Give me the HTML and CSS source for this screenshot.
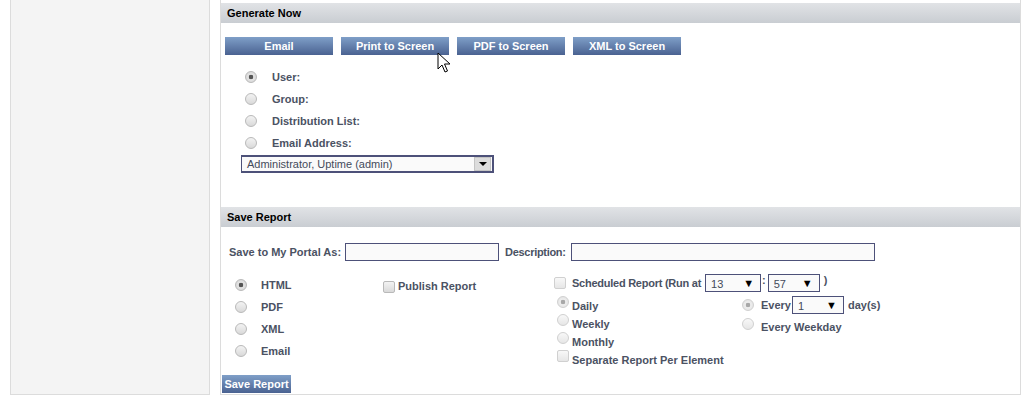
FILE: index.html
```html
<!DOCTYPE html>
<html lang="en">
<head>
    <meta charset="UTF-8">
    <title>Report Options</title>
    <link rel="stylesheet" href="styles.css">
</head>
<body>
<div class="page">
    <div class="sidebar"></div>

    <div class="main">
        <div class="section-head">Generate Now</div>
        <div class="generate">
            <div class="buttons">
                <button class="btn">Email</button>
                <button class="btn">Print to Screen</button>
                <button class="btn">PDF to Screen</button>
                <button class="btn">XML to Screen</button>
            </div>

            <div class="targets">
                <label class="target"><input type="radio" name="target" checked><span>User:</span></label>
                <label class="target"><input type="radio" name="target"><span>Group:</span></label>
                <label class="target"><input type="radio" name="target"><span>Distribution List:</span></label>
                <label class="target"><input type="radio" name="target"><span>Email Address:</span></label>
            </div>

            <div class="select wide">
                <span class="select-text">Administrator, Uptime (admin)</span>
                <span class="select-btn"><span class="tri"></span></span>
            </div>
        </div>

        <div class="section-head">Save Report</div>
        <div class="save">
            <div class="portal-row">
                <span class="lbl">Save to My Portal As:</span>
                <input class="text-in portal" type="text">
                <span class="lbl desc-lbl">Description:</span>
                <input class="text-in desc" type="text">
            </div>

            <div class="options">
                <div class="formats">
                    <label class="format"><input type="radio" name="fmt" checked><span>HTML</span></label>
                    <label class="format"><input type="radio" name="fmt"><span>PDF</span></label>
                    <label class="format"><input type="radio" name="fmt"><span>XML</span></label>
                    <label class="format"><input type="radio" name="fmt"><span>Email</span></label>
                </div>

                <div class="publish">
                    <label class="check"><input type="checkbox"><span>Publish Report</span></label>
                </div>

                <div class="schedule">
                    <div class="sched-row">
                        <input class="dim" type="checkbox">
                        <span class="lbl tight">Scheduled Report (Run at</span>
                        <div class="select small hour"><span class="select-text">13</span><span class="arrow">&#9660;</span></div>
                        <span class="lbl colon">:</span>
                        <div class="select small"><span class="select-text">57</span><span class="arrow">&#9660;</span></div>
                        <span class="lbl paren">)</span>
                    </div>
                    <div class="sched-cols">
                        <div class="freq">
                            <label class="freq-item"><input class="dim" type="radio" name="freq" checked disabled><span>Daily</span></label>
                            <label class="freq-item"><input class="dim" type="radio" name="freq" disabled><span>Weekly</span></label>
                            <label class="freq-item"><input class="dim" type="radio" name="freq" disabled><span>Monthly</span></label>
                            <label class="freq-item"><input class="dim" type="checkbox" disabled><span>Separate Report Per Element</span></label>
                        </div>
                        <div class="every">
                            <div class="every-item">
                                <input class="dim" type="radio" name="every" checked disabled>
                                <span class="lbl every-lbl">Every</span>
                                <div class="select small"><span class="select-text">1</span><span class="arrow">&#9660;</span></div>
                                <span class="lbl days">day(s)</span>
                            </div>
                            <label class="every-item weekday"><input class="dim" type="radio" name="every" disabled><span>Every Weekday</span></label>
                        </div>
                    </div>
                </div>
            </div>

            <button class="btn save-btn">Save Report</button>
        </div>
    </div>
</div>

<svg class="cursor" width="14" height="22" viewBox="0 0 14 22">
    <path d="M1 1 L1 17 L5 13 L8 20 L10.5 19 L7.5 12 L13 12 Z" fill="#fff" stroke="#000" stroke-width="1"/>
</svg>
</body>
</html>
```

FILE: styles.css
```css
:root {
    --panel-border: #dcdcdc;
    --label: #4b5263;
    --field-border: #4d5179;
    --btn-top: #7f9fc8;
    --btn-bottom: #4a6291;
}

* {
    box-sizing: border-box;
}

body {
    margin: 0;
    background: #ffffff;
    font-family: "Liberation Sans", Arial, sans-serif;
    font-size: 11px;
    color: var(--label);
}

.page {
    display: flex;
    gap: 10px;
    padding-left: 10px;
    width: 1021px;
    height: 395px;
}

.sidebar {
    width: 200px;
    background: #f4f4f4;
    border: 1px solid var(--panel-border);
    border-top: none;
}

.main {
    flex: 1;
    border: 1px solid var(--panel-border);
    border-top: none;
    padding-top: 3px;
    display: flex;
    flex-direction: column;
}

.section-head {
    height: 20px;
    line-height: 20px;
    padding-left: 6px;
    font-weight: bold;
    color: #000;
    background: linear-gradient(#e1e3e6, #c9cdd2);
}

/* generate now */
.generate {
    padding: 14px 0 0 4px;
    height: 184px;
}

.buttons {
    display: flex;
    gap: 8px;
}

.btn {
    width: 108px;
    height: 18px;
    padding: 0;
    border: none;
    background: linear-gradient(var(--btn-top), var(--btn-bottom));
    color: #fff;
    font-family: inherit;
    font-size: 11px;
    font-weight: bold;
}

.targets {
    margin-top: 11px;
    padding-left: 20px;
}

.target {
    display: flex;
    align-items: center;
    height: 22px;
    font-weight: bold;
}

.target span {
    margin-left: 15px;
}

input[type=radio],
input[type=checkbox] {
    appearance: none;
    margin: 0;
    width: 12px;
    height: 12px;
    border: 1px solid #b9b9b9;
    background: linear-gradient(#f3f3f3, #d9d9d9);
    flex: none;
}

input[type=radio] {
    border-radius: 50%;
}

input[type=checkbox] {
    border-radius: 2px;
}

input[type=radio]:checked {
    background: radial-gradient(circle, #555 0, #555 2px, #e4e4e4 2.6px, #d6d6d6 6px);
}

input.dim {
    border-color: #d0d0d0;
    background: linear-gradient(#f8f8f8, #e6e6e6);
}

input.dim[type=radio]:checked {
    background: radial-gradient(circle, #a8a8a8 0, #a8a8a8 2px, #eeeeee 2.6px, #e2e2e2 6px);
}

.select {
    display: flex;
    align-items: center;
    height: 18px;
    border: 1px solid var(--field-border);
    background: #fafafa;
}

.select.wide {
    width: 253px;
    margin: 1px 0 0 16px;
    border-width: 2px 2px 2px 1px;
}

.select-text {
    flex: 1;
    padding-left: 5px;
    color: #444b5a;
    font-weight: normal;
}

.select-btn {
    width: 17px;
    height: 14px;
    margin-right: 1px;
    background: #dcdcdc;
    border: 1px solid #c4c4c4;
    display: flex;
    align-items: center;
    justify-content: center;
}

.tri {
    width: 0;
    height: 0;
    border-left: 4px solid transparent;
    border-right: 4px solid transparent;
    border-top: 4px solid #000;
}

/* save report */
.save {
    padding: 16px 0 0 0;
    flex: 1;
    display: flex;
    flex-direction: column;
}

.portal-row {
    display: flex;
    align-items: center;
    padding-left: 8px;
    height: 18px;
}

.lbl {
    font-weight: bold;
    color: var(--label);
}

.tight {
    letter-spacing: -0.25px;
}

.text-in {
    height: 18px;
    border: 1px solid var(--field-border);
    background: #fafafa;
}

.portal {
    width: 154px;
    margin: 0 6px 0 4px;
}

.desc-lbl {
    letter-spacing: -0.3px;
}

.desc {
    width: 304px;
    margin-left: 5px;
}

.options {
    display: flex;
    margin-top: 13px;
}

.formats {
    width: 162px;
    padding-left: 14px;
}

.format {
    display: flex;
    align-items: center;
    height: 22px;
    font-weight: bold;
}

.format span {
    margin-left: 14px;
}

.publish {
    width: 171px;
    padding-top: 7px;
}

.check {
    display: flex;
    align-items: flex-start;
    font-weight: bold;
}

.check span {
    margin-left: 3px;
    line-height: 10px;
}

.schedule {
    flex: 1;
}

.sched-row {
    display: flex;
    align-items: center;
    height: 18px;
}

.sched-row input {
    margin-right: 6px;
}

.select.small {
    width: 52px;
    align-items: flex-end;
    padding-bottom: 1px;
}

.select.small.hour {
    width: 56px;
    margin-left: 4px;
}

.select.small .arrow {
    font-size: 11px;
    line-height: 14px;
    color: #000;
    margin-right: 6px;
}

.colon {
    margin: 0 2px 6px 1px;
}

.paren {
    margin: 0 0 6px 4px;
}

.sched-cols {
    display: flex;
    margin-top: 4px;
}

.freq {
    width: 188px;
    padding-left: 3px;
}

.freq-item {
    display: flex;
    align-items: flex-start;
    height: 18px;
    font-weight: bold;
}

.freq-item span {
    margin-left: 3px;
    padding-top: 4px;
}

.every-item {
    display: flex;
    align-items: center;
    height: 18px;
    font-weight: bold;
}

.every-lbl {
    margin: 0 1px 0 7px;
}

.days {
    margin-left: 4px;
}

.weekday {
    align-items: flex-start;
    margin-top: 4px;
}

.weekday span {
    margin-left: 7px;
    padding-top: 3px;
}

.save-btn {
    width: 69px;
    margin: auto 0 1px 1px;
}

.cursor {
    position: absolute;
    left: 437px;
    top: 52px;
}
```
